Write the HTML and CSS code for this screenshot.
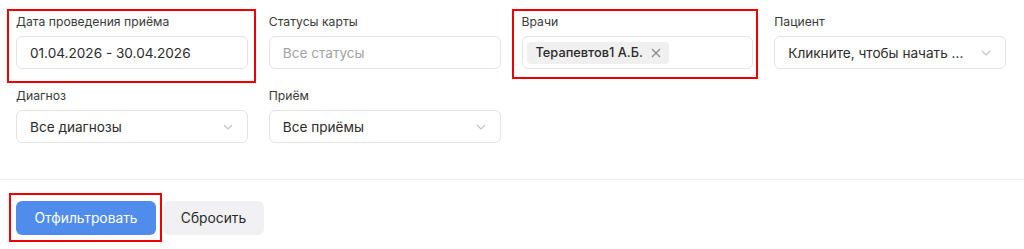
FILE: index.html
```html
<!DOCTYPE html>
<html lang="ru">
<head>
<meta charset="utf-8">
<link rel="stylesheet" href="styles.css">
</head>
<body>
<div class="page">
  <div class="filters">
    <div class="field mark mark-date">
      <div class="label">Дата проведения приёма</div>
      <div class="control"><span class="value">01.04.2026 - 30.04.2026</span></div>
    </div>
    <div class="field">
      <div class="label">Статусы карты</div>
      <div class="control"><span class="placeholder">Все статусы</span></div>
    </div>
    <div class="field mark mark-doc">
      <div class="label">Врачи</div>
      <div class="control tags">
        <span class="tag">Терапевтов1 А.Б.
          <svg class="tag-x" width="10" height="10" viewBox="0 0 10 10"><path d="M1 1L9 9M9 1L1 9" stroke="#8c8c8c" stroke-width="1.3" fill="none"/></svg>
        </span>
      </div>
    </div>
    <div class="field">
      <div class="label">Пациент</div>
      <div class="control select"><span class="value ellipsis">Кликните, чтобы начать ...</span>
        <svg class="chev" width="10" height="6" viewBox="0 0 10 6"><path d="M1 1L5 5L9 1" stroke="#c4c4c4" stroke-width="1.2" fill="none"/></svg>
      </div>
    </div>
    <div class="field">
      <div class="label">Диагноз</div>
      <div class="control select"><span class="value">Все диагнозы</span>
        <svg class="chev" width="10" height="6" viewBox="0 0 10 6"><path d="M1 1L5 5L9 1" stroke="#c4c4c4" stroke-width="1.2" fill="none"/></svg>
      </div>
    </div>
    <div class="field">
      <div class="label">Приём</div>
      <div class="control select"><span class="value">Все приёмы</span>
        <svg class="chev" width="10" height="6" viewBox="0 0 10 6"><path d="M1 1L5 5L9 1" stroke="#c4c4c4" stroke-width="1.2" fill="none"/></svg>
      </div>
    </div>
  </div>
  <div class="divider"></div>
  <div class="actions">
    <button class="btn btn-primary mark mark-btn">Отфильтровать</button>
    <button class="btn btn-secondary">Сбросить</button>
  </div>
</div>
</body>
</html>
```
FILE: styles.css
```css
* { box-sizing: border-box; }
html, body { margin: 0; padding: 0; background: #fff; }
body {
  font-family: Inter, "Noto Sans", "Liberation Sans", sans-serif;
  color: #2b2b2b;
  width: 1024px;
  height: 249px;
  overflow: hidden;
}
.page { padding-top: 14px; }
.filters {
  display: grid;
  grid-template-columns: repeat(4, 231.75px);
  column-gap: 21px;
  row-gap: 19px;
  padding: 0 18px 0 16px;
}
.field { display: flex; flex-direction: column; }
.label {
  font-size: 12.2px;
  line-height: 16px;
  color: #3a3a3a;
  margin-bottom: 6px;
}
.control {
  height: 33px;
  border: 1px solid #e4e4e4;
  border-radius: 6px;
  display: flex;
  align-items: center;
  padding: 0 13px;
  font-size: 13.6px;
  background: #fff;
}
.value { color: #2b2b2b; }
.placeholder { color: #a3a3a3; }
.ellipsis { white-space: nowrap; overflow: hidden; }
.select { justify-content: space-between; }
.chev { flex: none; margin-right: 1px; }
.tags { padding: 0 4px; }
.tag {
  display: inline-flex;
  align-items: center;
  gap: 8px;
  height: 22px;
  padding: 0 8px 0 9px;
  background: #f0f0f0;
  border-radius: 4px;
  font-size: 12.8px;
  font-weight: 500;
  color: #2b2b2b;
}
.tag-x { flex: none; }
.divider {
  height: 1px;
  background: #eeeeee;
  margin-top: 36px;
}
.actions {
  display: flex;
  gap: 7px;
  padding: 21px 16px 0;
}
.btn {
  font-family: inherit;
  font-size: 13.8px;
  height: 34px;
  border: none;
  border-radius: 6px;
  padding: 0 16px;
}
.btn-primary { background: #4f8cec; color: #fff; width: 140px; }
.btn-secondary { background: #f1f1f3; color: #2b2b2b; width: 101px; }
.mark { position: relative; }
.mark::after {
  content: "";
  position: absolute;
  border: 2px solid #f00000;
  pointer-events: none;
}
.mark-date::after { left: -9px; right: -8px; top: -5px; bottom: -14px; }
.mark-doc::after { left: -10px; right: -5px; top: -5px; bottom: -10px; }
.mark-btn::after { left: -7px; right: -6px; top: -8px; bottom: -7px; }
```
